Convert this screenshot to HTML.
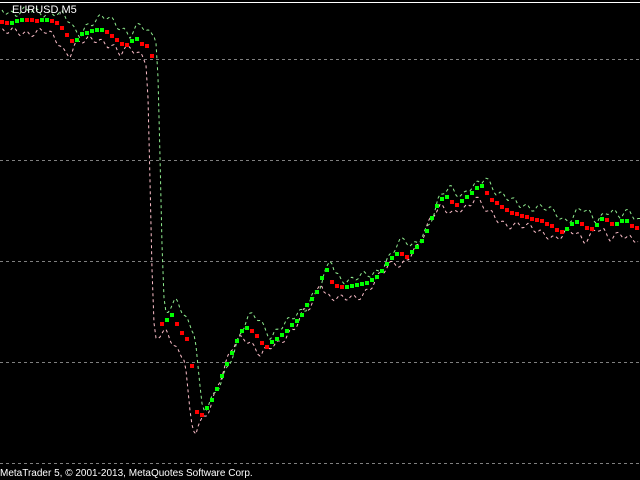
<!DOCTYPE html>
<html><head><meta charset="utf-8"><style>
html,body{margin:0;padding:0;background:#000;}
svg{display:block}
text{font-family:"Liberation Sans",sans-serif;fill:#fff}
</style></head><body>
<svg id="s" width="640" height="480" xmlns="http://www.w3.org/2000/svg">
<rect width="640" height="480" fill="#000"/>
<line x1="0" y1="2.5" x2="640" y2="2.5" stroke="#fff" stroke-width="1"/>
<g stroke="#808080" stroke-dasharray="3,3" stroke-width="1">
<line x1="0" y1="59.5" x2="640" y2="59.5"/>
<line x1="0" y1="160.5" x2="640" y2="160.5"/>
<line x1="0" y1="261.5" x2="640" y2="261.5"/>
<line x1="0" y1="362.5" x2="640" y2="362.5"/>
<line x1="0" y1="463.5" x2="640" y2="463.5"/>
</g>
<g id="g"></g>
<text x="12" y="13" font-size="11">EURUSD,M5</text>
<text x="0" y="476" font-size="10">MetaTrader 5, © 2001-2013, MetaQuotes Software Corp.</text>
</svg>
<script>
var P=[[0,20],[10,23],[20,21],[30,22],[40,23],[50,22],[58,26],[65,33],[70,42],[75,44],[80,36],[88,32],[95,29],[102,28],[108,31],[115,36],[120,40],[125,45],[130,40],[136,36],[142,42],[148,45],[152,55],[154,120],[156,220],[158,300],[160,325],[166,322],[172,316],[178,328],[184,338],[190,345],[193,380],[196,412],[200,420],[206,412],[212,402],[218,388],[224,372],[230,358],[236,342],[242,330],[248,326],[254,330],[260,338],[266,346],[272,340],[278,336],[284,332],[292,324],[300,318],[308,304],[316,296],[322,280],[326,268],[330,283],[336,288],[344,290],[352,288],[360,286],[368,284],[376,278],[382,270],[388,262],[394,254],[400,250],[406,256],[412,250],[418,244],[424,236],[430,222],[434,210],[440,200],[446,196],[452,202],[458,206],[464,200],[470,197],[476,192],[480,186],[486,194],[492,202],[498,206],[504,210],[512,214],[520,215],[528,217],[536,218],[544,220],[552,224],[560,230],[566,228],[572,222],[578,220],[584,224],[590,230],[596,226],[602,220],[608,222],[614,228],[620,224],[626,222],[632,228],[640,232]];
function yAt(x){if(x<=0)return P[0][1];for(var i=1;i<P.length;i++){if(x<=P[i][0]){var a=P[i-1],b=P[i];return a[1]+(b[1]-a[1])*(x-a[0])/(b[0]-a[0]);}}return P[P.length-1][1];}
var g=document.getElementById('g'),ns='http://www.w3.org/2000/svg';
var up='',dn='';
for(var x=0;x<=640;x+=2){var w=(x>150&&x<200)?14:10;var j=Math.sin(x*0.5)*3+Math.sin(x*0.17)*2;
var yu=yAt(x-3)-w+j, yd=yAt(x+3)+w-j;
up+=(x?'L':'M')+(x+2)+','+yu.toFixed(1);dn+=(x?'L':'M')+(x-2)+','+yd.toFixed(1);}
function path(d,c){var p=document.createElementNS(ns,'path');p.setAttribute('d',d);p.setAttribute('fill','none');p.setAttribute('stroke',c);p.setAttribute('stroke-width','1');p.setAttribute('stroke-dasharray','3,3');g.appendChild(p);}
path(up,'#90ee90');path(dn,'#ffc0cb');
var prev=yAt(0);
for(var x=2;x<640;x+=5){var y=yAt(x)+Math.sin(x*1.3)*2.5;var c=(y<=prev)?'#00ff00':'#ff0000';prev=y;
if(x>153&&x<158)continue;
var r=document.createElementNS(ns,'rect');r.setAttribute('x',x-2);r.setAttribute('y',(y-2).toFixed(0));r.setAttribute('width',4);r.setAttribute('height',4);r.setAttribute('fill',c);g.appendChild(r);}
</script>
</body></html>
